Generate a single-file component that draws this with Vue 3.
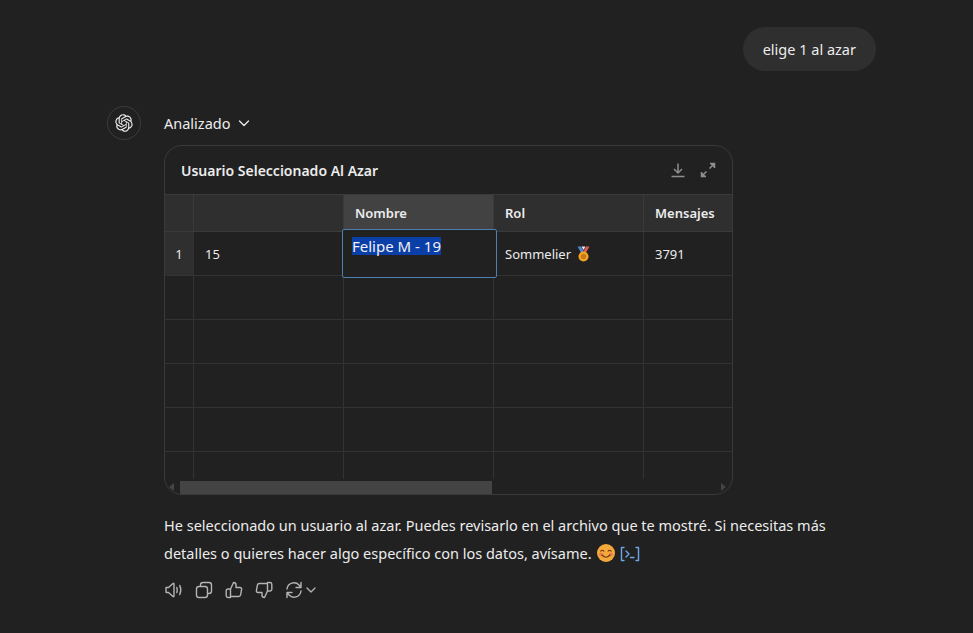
<script setup>
const emptyRows = [2, 3, 4, 5]
const openai = "M37.5324 16.8707C37.9808 15.5241 38.1363 14.0974 37.9886 12.6859C37.8409 11.2744 37.3934 9.91076 36.676 8.68622C35.6126 6.83404 33.9882 5.3676 32.0373 4.4985C30.0864 3.62941 27.9098 3.40259 25.8215 3.85078C24.8796 2.7893 23.7219 1.94125 22.4257 1.36341C21.1295 0.785575 19.7249 0.491269 18.3058 0.500197C16.1708 0.495044 14.0893 1.16803 12.3614 2.42214C10.6335 3.67624 9.34853 5.44666 8.6917 7.47815C7.30085 7.76286 5.98686 8.3414 4.8377 9.17505C3.68854 10.0087 2.73073 11.0782 2.02839 12.312C0.956464 14.1591 0.498905 16.2988 0.721698 18.4228C0.944492 20.5467 1.83612 22.5449 3.268 24.1293C2.81966 25.4759 2.66413 26.9026 2.81182 28.3141C2.95951 29.7256 3.40701 31.0892 4.12437 32.3138C5.18791 34.1659 6.8123 35.6322 8.76321 36.5013C10.7141 37.3704 12.8907 37.5973 14.9789 37.1492C15.9208 38.2107 17.0786 39.0587 18.3747 39.6366C19.6709 40.2144 21.0755 40.5087 22.4946 40.4998C24.6307 40.5054 26.7133 39.8321 28.4418 38.5772C30.1704 37.3223 31.4556 35.5506 32.1119 33.5179C33.5027 33.2332 34.8167 32.6547 35.9659 31.821C37.115 30.9874 38.0728 29.9178 38.7752 28.684C39.8458 26.8371 40.3023 24.6979 40.0789 22.5748C39.8556 20.4517 38.9639 18.4544 37.5324 16.8707ZM22.4978 37.8849C20.7443 37.8874 19.0459 37.2733 17.6994 36.1501C17.7601 36.117 17.8666 36.0586 17.936 36.0161L25.9004 31.4156C26.1003 31.3019 26.2663 31.137 26.3813 30.9378C26.4964 30.7386 26.5563 30.5124 26.5549 30.2825V19.0542L29.9213 20.998C29.9389 21.0068 29.9541 21.0198 29.9656 21.0359C29.977 21.052 29.9842 21.0707 29.9867 21.0902V30.3889C29.9842 32.375 29.1946 34.2791 27.7909 35.6841C26.3872 37.0892 24.4838 37.8806 22.4978 37.8849ZM6.39227 31.0064C5.51397 29.4888 5.19742 27.7107 5.49804 25.9832C5.55718 26.0187 5.66048 26.0818 5.73461 26.1244L13.699 30.7248C13.8975 30.8408 14.1233 30.902 14.3532 30.902C14.583 30.902 14.8088 30.8408 15.0073 30.7248L24.731 25.1103V28.9979C24.7321 29.0177 24.7283 29.0376 24.7199 29.0556C24.7115 29.0736 24.6988 29.0893 24.6829 29.1012L16.6317 33.7497C14.9096 34.7416 12.8643 35.0097 10.9447 34.4954C9.02506 33.9811 7.38785 32.7263 6.39227 31.0064ZM4.29707 13.6194C5.17156 12.0998 6.55279 10.9364 8.19885 10.3327C8.19885 10.4013 8.19491 10.5228 8.19491 10.6071V19.808C8.19351 20.0378 8.25334 20.2638 8.36823 20.4629C8.48312 20.6619 8.64893 20.8267 8.84863 20.9404L18.5723 26.5542L15.206 28.4979C15.1894 28.5089 15.1703 28.5155 15.1505 28.5173C15.1307 28.5191 15.1107 28.516 15.0924 28.5082L7.04046 23.8557C5.32135 22.8601 4.06716 21.2235 3.55289 19.3046C3.03862 17.3858 3.30624 15.3413 4.29707 13.6194ZM31.955 20.0556L22.2312 14.4411L25.5976 12.4981C25.6142 12.4872 25.6333 12.4805 25.6531 12.4787C25.6729 12.4769 25.6928 12.4801 25.7111 12.4879L33.7631 17.1364C34.9967 17.849 36.0017 18.8982 36.6606 20.1613C37.3194 21.4244 37.6047 22.849 37.4832 24.2684C37.3617 25.6878 36.8382 27.0432 35.9743 28.1759C35.1103 29.3086 33.9415 30.1717 32.6047 30.6641C32.6047 30.5947 32.6047 30.4733 32.6047 30.3889V21.188C32.6066 20.9586 32.5474 20.7328 32.4332 20.5338C32.319 20.3348 32.154 20.1698 31.955 20.0556ZM35.3055 15.0128C35.2464 14.9765 35.1431 14.9142 35.069 14.8717L27.1045 10.2712C26.906 10.1554 26.6803 10.0943 26.4504 10.0943C26.2206 10.0943 25.9948 10.1554 25.7963 10.2712L16.0726 15.8858V11.9982C16.0715 11.9783 16.0753 11.9585 16.0837 11.9405C16.0921 11.9225 16.1048 11.9068 16.1207 11.8949L24.1719 7.25025C25.4053 6.53903 26.8158 6.19376 28.2383 6.25482C29.6608 6.31589 31.0364 6.78077 32.2044 7.59508C33.3723 8.40939 34.2842 9.53945 34.8334 10.8531C35.3826 12.1667 35.5464 13.6095 35.3055 15.0128ZM14.2424 21.9419L10.8752 19.9981C10.8576 19.9893 10.8423 19.9763 10.8309 19.9602C10.8195 19.9441 10.8122 19.9254 10.8098 19.9058V10.6071C10.8107 9.18295 11.2173 7.78848 11.9819 6.58696C12.7466 5.38544 13.8377 4.42659 15.1275 3.82264C16.4173 3.21869 17.8524 2.99464 19.2649 3.1767C20.6775 3.35876 22.0089 3.93941 23.1034 4.85067C23.0427 4.88379 22.937 4.94215 22.8668 4.98473L14.9024 9.58517C14.7025 9.69878 14.5366 9.86356 14.4215 10.0626C14.3065 10.2616 14.2466 10.4877 14.2479 10.7175L14.2424 21.9419ZM16.071 17.9991L20.4018 15.4978L24.7325 17.9975V22.9985L20.4018 25.4983L16.071 22.9985V17.9991Z"
</script>

<template>
  <main class="page">
    <div class="user-row"><div class="bubble">elige 1 al azar</div></div>
    <div class="assistant">
      <div class="avatar">
        <svg width="18" height="18" viewBox="0 0 41 41"><path :d="openai" fill="#ececec" /></svg>
      </div>
      <div class="content">
        <div class="analyzed">
          <span>Analizado</span>
          <svg width="14" height="14" viewBox="0 0 14 14" fill="none" stroke="#ececec" stroke-width="1.3" stroke-linecap="round" stroke-linejoin="round"><path d="M2.5 5l4.5 4.5L11.5 5" /></svg>
        </div>
        <section class="card">
          <header class="card-head">
            <h2>Usuario Seleccionado Al Azar</h2>
            <div class="head-icons">
              <svg width="16" height="16" viewBox="0 0 16 16" fill="none" stroke="#8e8e8e" stroke-width="1.5"><path d="M8 1.5v9M4 7l4 4 4-4" /><path d="M1.5 14.5h13" /></svg>
              <svg width="16" height="16" viewBox="0 0 16 16" fill="none" stroke="#8e8e8e" stroke-width="1.5"><path d="M9.5 6.5L14 2M1.9 14L6.500 9.500" /><path d="M10 1.500h4.500V6" fill="#8e8e8e" /><path d="M1.500 10v4.500H6" fill="#8e8e8e" /></svg>
            </div>
          </header>
          <div class="table">
            <div class="row head">
              <div class="cell num"></div>
              <div class="cell col"></div>
              <div class="cell col active">Nombre</div>
              <div class="cell col">Rol</div>
              <div class="cell last">Mensajes</div>
            </div>
            <div class="row body first">
              <div class="cell num side">1</div>
              <div class="cell col">15</div>
              <div class="cell col selected-host">
                <div class="selected"><span class="sel-text">Felipe M - 19</span></div>
              </div>
              <div class="cell col">
                Sommelier
                <svg class="medal" width="15" height="16" viewBox="0 0 15 16">
                  <path d="M1.500 0.500h3.500l3 5.500-2.500 1.500z" fill="#4f86d6" />
                  <path d="M13.500 0.500h-3.500l-3 5.500 2.500 1.500z" fill="#e0574f" />
                  <path d="M5.500 0.500h4l-2 3.500z" fill="#eeeeee" />
                  <circle cx="7.500" cy="10.500" r="5" fill="#f5a623" />
                  <circle cx="7.500" cy="10.500" r="2.800" fill="#c9791a" />
                </svg>
              </div>
              <div class="cell last">3791</div>
            </div>
            <div v-for="r in emptyRows" :key="r" class="row body">
              <div class="cell num"></div>
              <div class="cell col"></div>
              <div class="cell col"></div>
              <div class="cell col"></div>
              <div class="cell last"></div>
            </div>
            <div class="row tail">
              <div class="cell num"></div>
              <div class="cell col"></div>
              <div class="cell col"></div>
              <div class="cell col"></div>
              <div class="cell last"></div>
            </div>
          </div>
          <div class="scrollbar">
            <span class="arrow left"></span>
            <span class="thumb"></span>
            <span class="arrow right"></span>
          </div>
        </section>
        <p class="answer">
          He seleccionado un usuario al azar. Puedes revisarlo en el archivo que te mostré. Si necesitas más detalles o quieres hacer algo específico con los datos, avísame.
          <svg class="smile" width="18" height="18" viewBox="0 0 18 18">
            <circle cx="9" cy="9" r="9" fill="#f5a93a" />
            <circle cx="4" cy="10.500" r="2" fill="#ef8052" />
            <circle cx="14" cy="10.500" r="2" fill="#ef8052" />
            <path d="M3.800 7.200q1.500-2 3 0M11.200 7.200q1.500-2 3 0" fill="none" stroke="#6b3b12" stroke-width="1.100" stroke-linecap="round" />
            <path d="M5 11q4 4.500 8 0" fill="none" stroke="#6b3b12" stroke-width="1.200" stroke-linecap="round" />
          </svg>
          <svg class="code" width="20" height="16" viewBox="0 0 20 16" fill="none" stroke="#6ea8e8" stroke-width="1.400" stroke-linecap="round" stroke-linejoin="round">
            <path d="M4 1.500H1.500v13H4M16 1.500h2.500v13H16" />
            <path d="M6 5l3 3-3 3M10.500 11.500H14" />
          </svg>
        </p>
        <div class="actions">
          <svg width="20" height="20" viewBox="0 0 20 20" fill="none" stroke="#b4b4b4" stroke-width="1.400" stroke-linejoin="round" stroke-linecap="round"><path d="M2 7.500h2.500L9 3.500c.5-.4 1-.1 1 .5v12c0 .6-.5.9-1 .5l-4.500-4H2.500q-.5 0-.5-.5z" /><path d="M12.800 7.500q1 2.500 0 5M15.800 5.500q2 4.500 0 9" /></svg>
          <svg width="20" height="20" viewBox="0 0 20 20" fill="none" stroke="#b4b4b4" stroke-width="1.400" stroke-linejoin="round"><rect x="2.500" y="6.500" width="11" height="11" rx="2.500" /><path d="M6.500 6.500V5a2.500 2.500 0 0 1 2.500-2.500h6A2.500 2.500 0 0 1 17.500 5v6a2.500 2.500 0 0 1-2.500 2.500h-1.500" /></svg>
          <svg width="20" height="20" viewBox="0 0 20 20" fill="none" stroke="#b4b4b4" stroke-width="1.400" stroke-linejoin="round" stroke-linecap="round"><path d="M6.500 9l3-6.500c1.500 0 2.500 1 2.500 2.500v2.500h4c1 0 1.800.9 1.600 1.900l-1 5.500c-.2.900-.9 1.600-1.900 1.600H6.500z" /><path d="M6.500 9H4a1.800 1.800 0 0 0-1.800 1.800v5A1.800 1.800 0 0 0 4 17.500h2.500" /></svg>
          <svg width="20" height="20" viewBox="0 0 20 20" fill="none" stroke="#b4b4b4" stroke-width="1.400" stroke-linejoin="round" stroke-linecap="round"><path d="M13.500 11l-3 6.500c-1.500 0-2.500-1-2.500-2.500v-2.500H4c-1 0-1.800-.9-1.600-1.900l1-5.500c.2-.9.900-1.600 1.900-1.600h8.200z" /><path d="M13.500 11H16a1.800 1.800 0 0 0 1.800-1.800v-5A1.800 1.800 0 0 0 16 2.500h-2.500" /></svg>
          <span class="regen">
            <svg width="20" height="20" viewBox="0 0 20 20" fill="none" stroke="#b4b4b4" stroke-width="1.400" stroke-linejoin="round" stroke-linecap="round"><path d="M3 9a7 7 0 0 1 12-4l2 2.500M17 2.500v5h-5" /><path d="M17 11a7 7 0 0 1-12 4l-2-2.500M3 17.500v-5h5" /></svg>
            <svg width="12" height="12" viewBox="0 0 12 12" fill="none" stroke="#b4b4b4" stroke-width="1.300" stroke-linecap="round" stroke-linejoin="round"><path d="M2 4l4 4 4-4" /></svg>
          </span>
        </div>
      </div>
    </div>
  </main>
</template>

<style scoped>
.page {
  height: 633px;
  box-sizing: border-box;
  padding: 27px 97px 0 107px;
  background: #212121;
  color: #ececec;
  font-family: "Noto Sans", sans-serif;
  font-size: 14.5px;
  overflow: hidden;
}
.user-row { display: flex; justify-content: flex-end; }
.bubble {
  height: 44px;
  line-height: 44px;
  padding: 0 20px;
  border-radius: 22px;
  background: #2f2f2f;
}
.assistant { display: flex; gap: 23px; margin-top: 35px; }
.avatar {
  width: 34px;
  height: 34px;
  box-sizing: border-box;
  border: 1px solid #3c3c3c;
  border-radius: 50%;
  display: flex;
  align-items: center;
  justify-content: center;
  flex: none;
}
.content { width: 569px; }
.analyzed {
  display: flex;
  align-items: center;
  gap: 7px;
  height: 20px;
  margin-top: 7px;
  margin-bottom: 12px;
}
.card {
  box-sizing: border-box;
  height: 350px;
  border: 1px solid #3a3a3a;
  border-radius: 18px;
  overflow: hidden;
  position: relative;
}
.card-head {
  height: 48px;
  display: flex;
  align-items: center;
  justify-content: space-between;
  padding: 0 16px;
}
.card-head h2 { margin: 0; font-size: 14px; font-weight: 600; }
.head-icons { display: flex; gap: 14px; }
.table { overflow: hidden; }
.row {
  display: grid;
  grid-template-columns: 29px 150px 150px 150px 1fr;
}
.head { height: 38px; background: #2f2f2f; border-top: 1px solid #3a3a3a; box-sizing: border-box; }
.body { height: 44px; }
.tail { height: 27px; }
.cell {
  box-sizing: border-box;
  display: flex;
  align-items: center;
  gap: 5px;
  padding-left: 11px;
  font-size: 13px;
  border-right: 1px solid #333333;
  border-bottom: 1px solid #333333;
}
.tail .cell { border-bottom: 0; }
.head .cell { font-weight: 600; border-color: #3a3a3a; }
.num { padding-left: 0; justify-content: center; }
.side { background: #2f2f2f; }
.last { border-right: 0; }
.active { background: #424242; }
.selected-host { position: relative; }
.selected {
  position: absolute;
  left: -2px;
  top: -3px;
  width: 155px;
  height: 49px;
  box-sizing: border-box;
  border: 1px solid #4f7fae;
  border-radius: 2px;
  background: #212121;
  padding: 7px 9px;
  font-size: 15px;
  line-height: 18px;
  z-index: 2;
}
.sel-text { background: #0b3fa8; color: #f2f2f2; display: inline-block; }
.scrollbar {
  height: 16px;
  display: flex;
  align-items: center;
  padding: 0 6px 0 4px;
}
.thumb { width: 312px; height: 13px; background: #444444; margin-left: 6px; margin-right: auto; }
.arrow { width: 0; height: 0; border-top: 4px solid transparent; border-bottom: 4px solid transparent; }
.arrow.left { border-right: 5px solid #444444; }
.arrow.right { border-left: 5px solid #444444; }
.answer {
  margin: 16px 0 0;
  line-height: 28px;
  font-size: 14.5px;
  width: 700px;
}
.smile { vertical-align: -3px; margin-left: 2px; }
.code { vertical-align: -3px; margin-left: 5px; }
.actions {
  display: flex;
  align-items: center;
  gap: 10px;
  margin-top: 13px;
}
.regen { display: flex; align-items: center; gap: 1px; }
</style>
